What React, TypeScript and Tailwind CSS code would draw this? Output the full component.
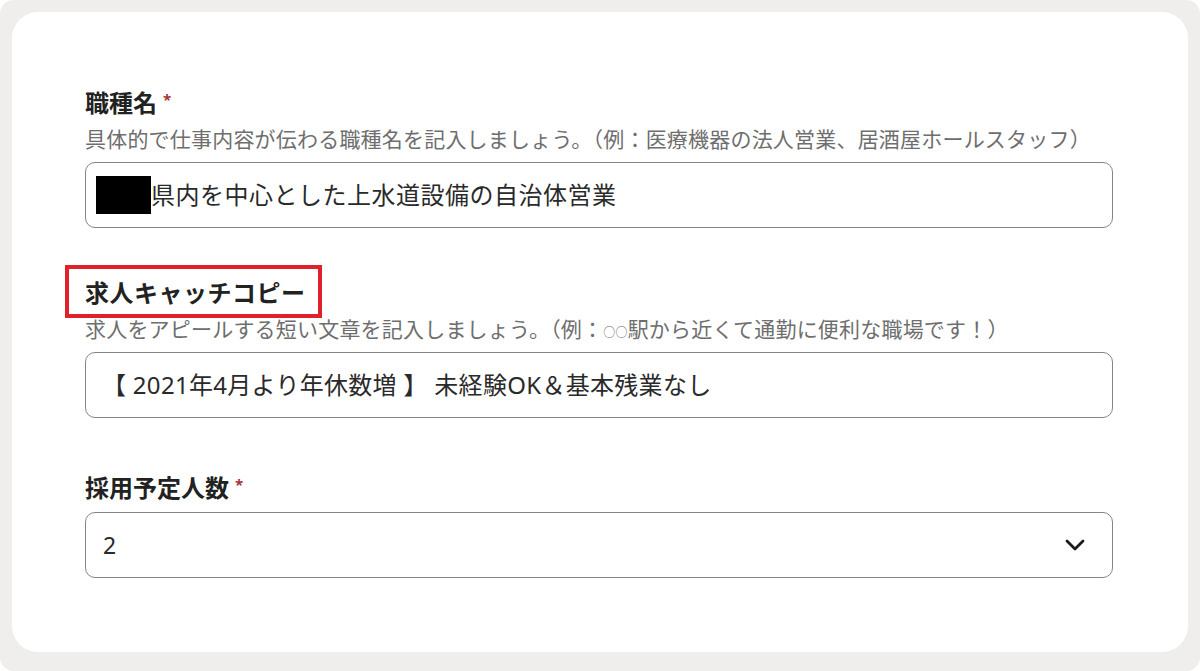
import React from 'react';

const font = { fontFamily: '"Noto Sans", "Noto Sans CJK JP", sans-serif' };

const Required: React.FC = () => (
  <span className="ml-[6px] text-[15px] font-bold text-[#a3343b] relative top-[-4px]">*</span>
);

const Chevron: React.FC = () => (
  <svg width="20" height="13" viewBox="0 0 20 13" fill="none" className="shrink-0">
    <polyline points="2,2 10,10 18,2" stroke="#1a1a1a" strokeWidth="2.8" strokeLinecap="round" strokeLinejoin="round" />
  </svg>
);

const App: React.FC = () => {
  return (
    <div className="w-[1200px] h-[671px] bg-white" style={font}>
      <div className="w-full h-full bg-[#efeeec] rounded-[14px] pt-[12px] px-[12px] pb-[19px]">
        <div className="w-full h-full bg-white rounded-[26px] pt-[76px] pl-[73px] pr-[75px] flex flex-col">
          {/* 職種名 */}
          <div className="flex flex-col">
            <div className="h-[30px] mb-[6px] flex items-center text-[24px] font-bold text-[#222] leading-none">
              職種名
              <Required />
            </div>
            <p className="text-[21px] tracking-[0.2px] leading-[30px] text-[#6e6e6e] mb-[8px] whitespace-nowrap">
              具体的で仕事内容が伝わる職種名を記入しましょう。（例：医療機器の法人営業、居酒屋ホールスタッフ）
            </p>
            <div className="h-[66px] border-[1.5px] border-[#858585] rounded-[10px] pl-[16px] flex items-center text-[24px] tracking-[0.5px] text-[#2a2a2a]">
              <span className="inline-block w-[55px] h-[38px] bg-black -ml-[6px]" />
              県内を中心とした上水道設備の自治体営業
            </div>
          </div>

          {/* 求人キャッチコピー */}
          <div className="flex flex-col mt-[50px]">
            <div className="relative h-[30px] mb-[6px] flex items-center text-[24px] font-bold text-[#222] leading-none tracking-[0.5px]">
              <span className="absolute left-[-20px] top-[-13px] w-[257px] h-[53px] border-[4px] border-[#e0212b]" />
              求人キャッチコピー
            </div>
            <p className="h-[30px] text-[21px] tracking-[0.2px] leading-[30px] text-[#6e6e6e] mb-[8px] whitespace-nowrap">
              求人をアピールする短い文章を記入しましょう。（例：<span className="text-[12px] leading-none">○○</span>駅から近くて通勤に便利な職場です！）
            </p>
            <div className="h-[66px] border-[1.5px] border-[#858585] rounded-[10px] pl-[16px] flex items-center text-[24px] tracking-[0.3px] text-[#2a2a2a] whitespace-pre">
              【 2021年4月より年休数増 】 未経験OK＆基本残業なし
            </div>
          </div>

          {/* 採用予定人数 */}
          <div className="flex flex-col mt-[55px]">
            <div className="h-[30px] mb-[9px] flex items-center text-[24px] font-bold text-[#222] leading-none">
              採用予定人数
              <Required />
            </div>
            <div className="h-[66px] border-[1.5px] border-[#858585] rounded-[10px] pl-[17px] pr-[27px] flex items-center justify-between text-[23px] text-[#2a2a2a]">
              <span>2</span>
              <Chevron />
            </div>
          </div>
        </div>
      </div>
    </div>
  );
};

export default App;
